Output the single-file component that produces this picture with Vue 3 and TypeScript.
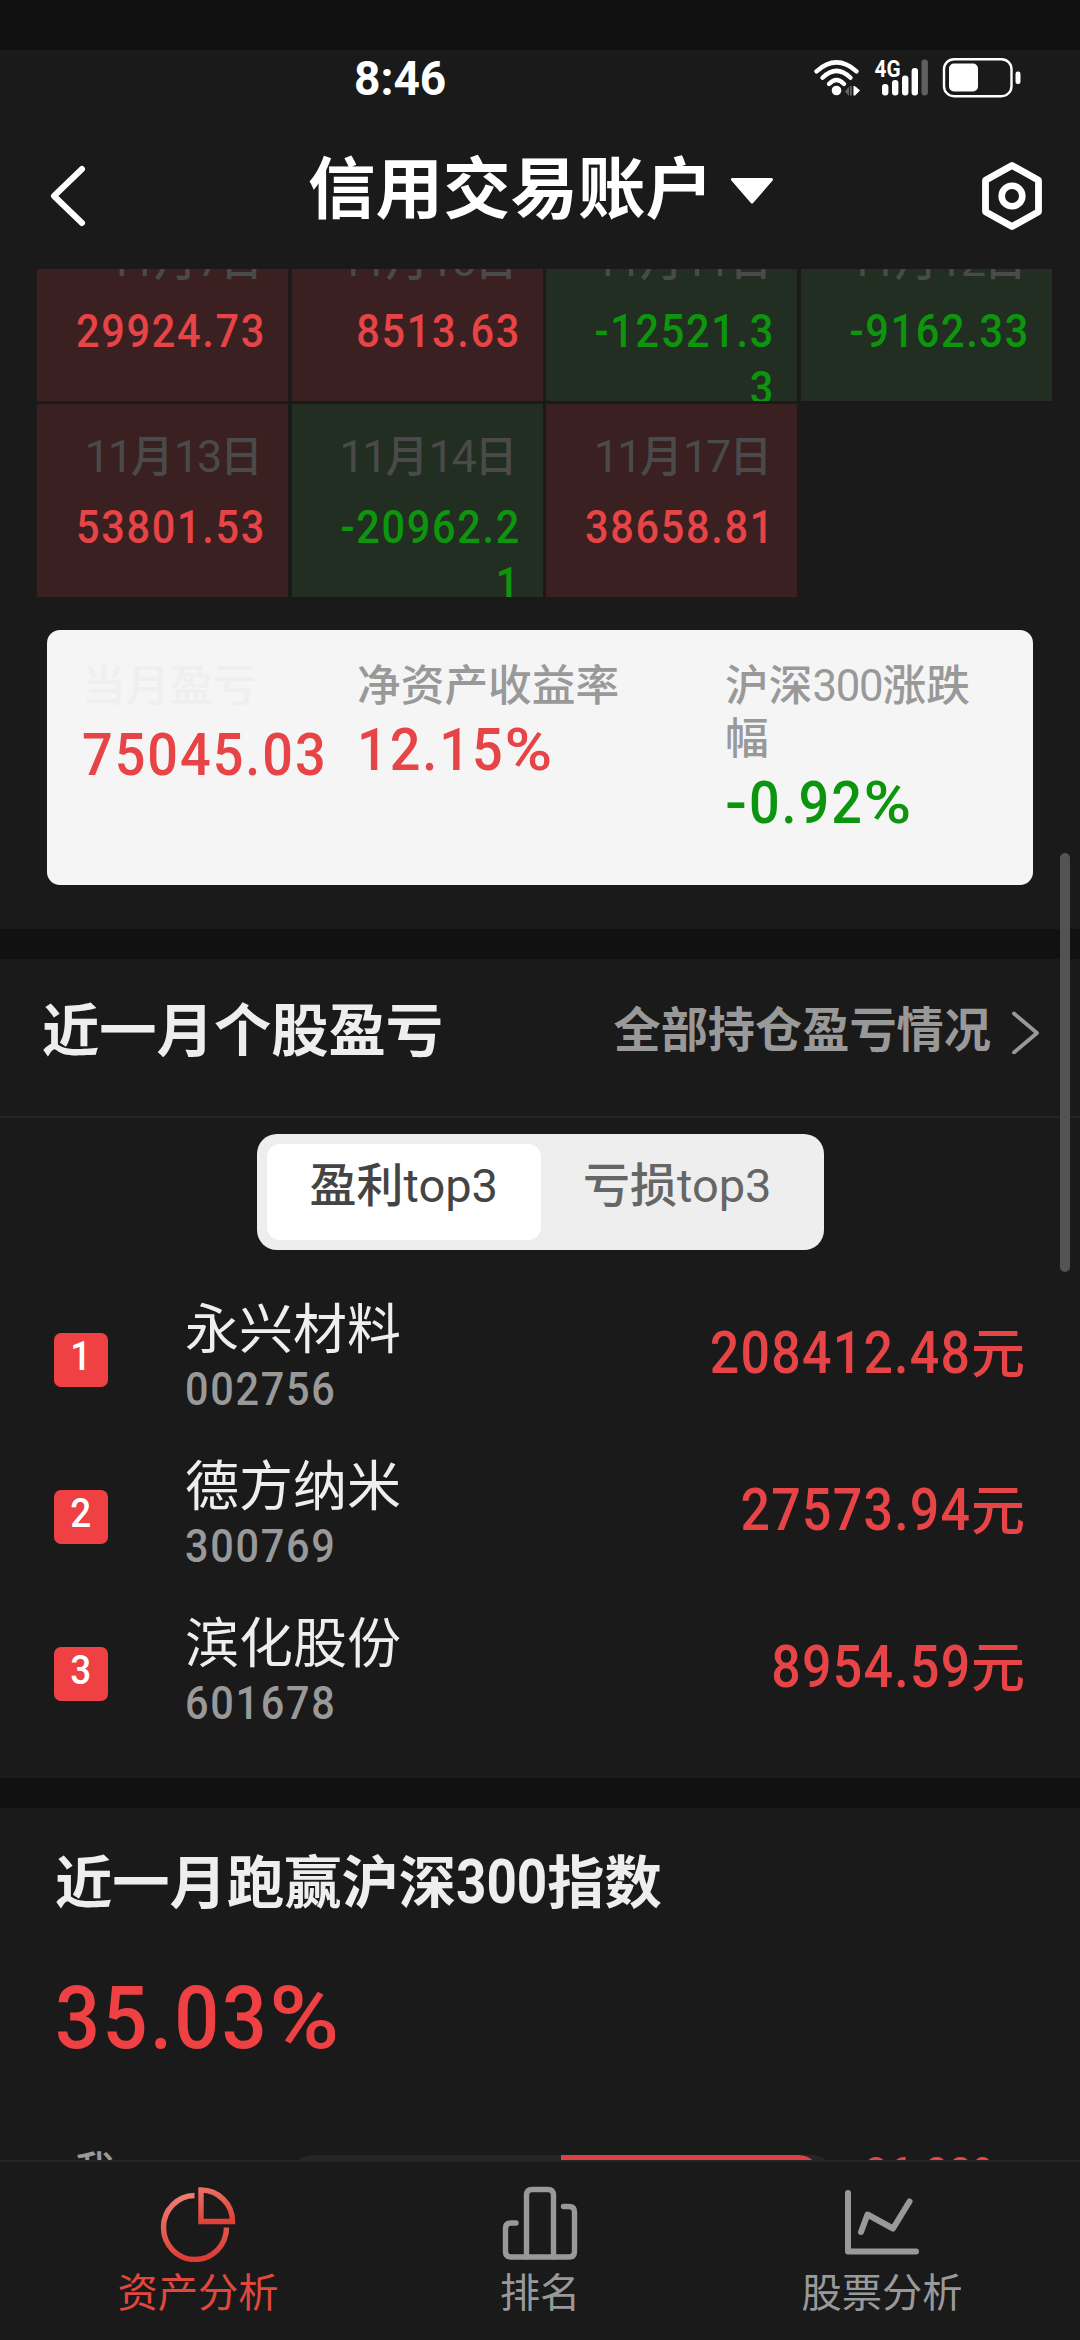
<script setup lang="ts">
interface DayCell { date: string; value: string; up: boolean }
interface Stock { rank: number; name: string; code: string; amount: string }

const days: DayCell[] = [
  { date: '11月7日', value: '29924.73', up: true },
  { date: '11月10日', value: '8513.63', up: true },
  { date: '11月11日', value: '-12521.33', up: false },
  { date: '11月12日', value: '-9162.33', up: false },
  { date: '11月13日', value: '53801.53', up: true },
  { date: '11月14日', value: '-20962.21', up: false },
  { date: '11月17日', value: '38658.81', up: true },
]

const stocks: Stock[] = [
  { rank: 1, name: '永兴材料', code: '002756', amount: '208412.48' },
  { rank: 2, name: '德方纳米', code: '300769', amount: '27573.94' },
  { rank: 3, name: '滨化股份', code: '601678', amount: '8954.59' },
]

// Splits "11月13日" into digit runs and characters so they can be spaced separately.
const dateParts = (date: string): string[] => date.match(/\d+|\D/g) ?? []
</script>

<template>
  <div class="screen">
    <div class="top-strip"></div>

    <div class="status">
      <span class="clock">8:46</span>
      <svg class="status-icons" width="210" height="42" viewBox="0 0 210 42">
        <g fill="none" stroke="#fff" stroke-width="4.4" stroke-linecap="round">
          <path d="M3.500 13.300Q23.500 -4.500 43.500 13.300" />
          <path d="M9.500 19.800Q23.500 6 37.500 19.800" />
          <path d="M16 26Q23.500 18 31 26" />
        </g>
        <circle cx="23.500" cy="32.500" r="4.800" fill="#fff" />
        <path d="M32 33.500l4-5v9.500zM37 28h1.800v9.500H37z" fill="#666" />
        <path d="M40.500 28h1.800v9.500h-1.800zM42 28l5 4.500l-5 5z" fill="#fff" />
        <text x="61.500" y="19" class="net" textLength="26" lengthAdjust="spacingAndGlyphs">4G</text>
        <g fill="#fff">
          <rect x="69" y="26" width="6.400" height="11.500" rx="3" />
          <rect x="79" y="22" width="6.400" height="15.500" rx="3" />
          <rect x="89" y="17.500" width="6.400" height="20" rx="3" />
          <rect x="98.600" y="10" width="6.400" height="27.500" rx="3" />
        </g>
        <rect x="108.500" y="1.500" width="6.400" height="36" rx="3" fill="#606060" />
        <rect x="131" y="1.200" width="67.500" height="37" rx="10" fill="none" stroke="#fff" stroke-width="2.400" />
        <rect x="136" y="5.500" width="29" height="28" rx="5" fill="#fff" />
        <rect x="202.500" y="13.500" width="5" height="12.500" rx="2.300" fill="#fff" />
      </svg>
    </div>

    <header class="nav">
      <svg class="back" width="40" height="64" viewBox="0 0 40 64">
        <path d="M34 5L6 32L34 59" fill="none" stroke="#fff" stroke-width="6" stroke-linecap="round" stroke-linejoin="round" />
      </svg>
      <div class="nav-title">
        <span>信用交易账户</span>
        <svg width="46" height="30" viewBox="0 0 46 30">
          <path d="M3.500 3.500H42.500L23 26Z" fill="#fff" stroke="#fff" stroke-width="3" stroke-linejoin="round" />
        </svg>
      </div>
      <svg class="gear" width="64" height="72" viewBox="0 0 64 72">
        <path d="M32 5.500L58.500 20.200V51.800L32 66.500L5.500 51.800V20.200Z" fill="none" stroke="#fff" stroke-width="6.800" stroke-linejoin="round" />
        <circle cx="32" cy="36" r="10.300" fill="none" stroke="#fff" stroke-width="6.600" />
      </svg>
    </header>

    <main class="scroller">
      <div class="calendar">
        <div v-for="d in days" :key="d.date" class="day" :class="d.up ? 'day-up' : 'day-down'">
          <div class="day-date"><span v-for="(p, i) in dateParts(d.date)" :key="i" :class="{ digits: /\d/.test(p) }">{{ p }}</span></div>
          <div class="day-value">{{ d.value }}</div>
        </div>
      </div>

      <section class="summary">
        <div class="sum-col first">
          <div class="sum-label faint">当月盈亏</div>
          <div class="sum-value red">75045.03</div>
        </div>
        <div class="sum-col second">
          <div class="sum-label">净资产收益率</div>
          <div class="sum-value red">12.15<span class="percent">%</span></div>
        </div>
        <div class="sum-col third">
          <div class="sum-label">沪深<span class="tight">300</span>涨跌幅</div>
          <div class="sum-value green"><span class="minus">-</span>0.92<span class="percent">%</span></div>
        </div>
      </section>

      <div class="band first-band"></div>

      <div class="section-head">
        <h2>近一月个股盈亏</h2>
        <div class="more">
          <span>全部持仓盈亏情况</span>
          <svg width="30" height="44" viewBox="0 0 30 44">
            <path d="M3 3.500L26 23L3 42.500" fill="none" stroke="#999" stroke-width="3.800" stroke-linecap="round" stroke-linejoin="round" />
          </svg>
        </div>
      </div>

      <div class="tabs">
        <div class="tab active">盈利<span class="latin">top3</span></div>
        <div class="tab">亏损<span class="latin">top3</span></div>
      </div>

      <div class="stocks">
        <div v-for="s in stocks" :key="s.rank" class="stock">
          <div class="rank"><span>{{ s.rank }}</span></div>
          <div class="who">
            <div class="name">{{ s.name }}</div>
            <div class="code">{{ s.code }}</div>
          </div>
          <div class="amount"><span class="sum">{{ s.amount }}</span><span class="yuan">元</span></div>
        </div>
      </div>

      <div class="band"></div>

      <section class="beat">
        <h2>近一月跑赢沪深<span class="num">300</span>指数</h2>
        <div class="beat-value">35.03<span class="percent">%</span></div>
        <div class="compare">
          <span class="me">我</span>
          <div class="track"><div class="fill"></div></div>
          <span class="pct">36.22<span class="percent">%</span></span>
        </div>
      </section>
    </main>

    <nav class="bottom">
      <div class="item on">
        <svg width="76" height="76" viewBox="0 0 76 76">
          <defs>
            <linearGradient id="ring" gradientUnits="userSpaceOnUse" x1="0" y1="0" x2="12" y2="76">
              <stop offset="0" stop-color="#f08a7c" />
              <stop offset="1" stop-color="#de3d34" />
            </linearGradient>
            <linearGradient id="slice" gradientUnits="userSpaceOnUse" x1="50" y1="0" x2="54" y2="38">
              <stop offset="0" stop-color="#ec7164" />
              <stop offset="1" stop-color="#e03f36" />
            </linearGradient>
          </defs>
          <path d="M34.500 9.500A31.500 32 0 1 0 66.500 41.500" fill="none" stroke="url(#ring)" stroke-width="5.400" />
          <path d="M41 4V35.500H72.500A31.500 31.500 0 0 0 41 4Z" fill="none" stroke="url(#slice)" stroke-width="5.400" />
        </svg>
        <span>资产分析</span>
      </div>
      <div class="item">
        <svg width="76" height="76" viewBox="0 0 76 76">
          <g fill="none" stroke="#999" stroke-width="5.400" stroke-linecap="round" stroke-linejoin="round">
            <path d="M24.500 71V9.500Q24.500 3.500 30 3.500H46Q51.500 3.500 51.500 9.500V71" />
            <path d="M14 37H9Q3.500 37 3.500 42.500V65.500Q3.500 71 9 71H67Q72.500 71 72.500 65.500V26Q72.500 20.500 67 20.500H61.500" />
          </g>
        </svg>
        <span>排名</span>
      </div>
      <div class="item">
        <svg width="76" height="76" viewBox="0 0 76 76">
          <g fill="none" stroke="#999" stroke-width="6" stroke-linecap="round" stroke-linejoin="round">
            <path d="M4 7V65.500H72" />
            <path d="M17 46L23.500 28.500L49 42.500L65.500 15.500" />
          </g>
        </svg>
        <span>股票分析</span>
      </div>
    </nav>

    <div class="scrollbar"></div>
  </div>
</template>

<style>
body {
  margin: 0;
  background: #1a1a1a;
}
</style>

<style scoped>
.screen {
  position: relative;
  display: flex;
  flex-direction: column;
  width: 1080px;
  height: 2340px;
  overflow: hidden;
  background: #1a1a1a;
  color: #eee;
  font-family: Roboto, "Noto Sans CJK SC", sans-serif;
}
.top-strip {
  flex: none;
  height: 50px;
  background: #111;
}
.status {
  flex: none;
  display: flex;
  align-items: flex-start;
  justify-content: space-between;
  height: 90px;
  padding: 0 45px 0 354px;
  box-sizing: border-box;
}
.clock {
  color: #fff;
  font-size: 48px;
  font-weight: 700;
  line-height: 58px;
  transform: scaleX(0.96);
  transform-origin: left;
}
.status-icons {
  margin: 8px 12px 0 0;
}
.net {
  font-family: Roboto, sans-serif;
  font-size: 24px;
  font-weight: 700;
  fill: #fff;
}
.nav {
  flex: none;
  display: flex;
  align-items: center;
  justify-content: space-between;
  height: 129px;
  padding: 0 36px 18px 48px;
  box-sizing: border-box;
}
.back,
.gear {
  flex: none;
}
.nav-title {
  display: flex;
  align-items: center;
  gap: 16px;
  color: #fff;
  font-size: 67.500px;
  font-weight: 700;
  line-height: 80px;
  padding: 0 0 12px 15px;
}
.nav-title svg {
  margin-top: 3px;
}
.scroller {
  flex: none;
  display: flex;
  flex-direction: column;
  height: 1891px;
  overflow: hidden;
}
.calendar {
  flex: none;
  display: grid;
  grid-template-columns: repeat(4, 251px);
  grid-auto-rows: 193px;
  gap: 3px 3.600px;
  margin: -61px 0 0 37px;
}
.day {
  overflow: hidden;
  box-sizing: border-box;
  padding: 25px 22px 0 0;
  text-align: right;
}
.day-up {
  background: #3a2020;
  color: #e64446;
}
.day-down {
  background: #232e23;
  color: #0d960d;
}
.day-date {
  color: #4a4a4a;
  font-size: 43px;
  font-weight: 500;
  line-height: 56px;
  padding-right: 3px;
}
.digits {
  font-size: 45px;
  font-weight: 400;
  letter-spacing: -2.200px;
}
.day-value {
  width: 217px;
  margin: 14px 0 0 auto;
  font-size: 46px;
  font-weight: 500;
  line-height: 57px;
  letter-spacing: 1.900px;
  word-break: break-all;
  transform: scaleX(0.9);
  transform-origin: right;
}
.summary {
  flex: none;
  display: flex;
  box-sizing: border-box;
  height: 255px;
  margin: 33px 47px 0;
  padding: 30px 0 0 35px;
  border-radius: 13px;
  background: #f5f5f5;
}
.sum-col.first { width: 275px; }
.sum-col.second { width: 368px; }
.sum-col.third { width: 250px; }
.sum-label {
  color: #999;
  font-size: 43.700px;
  font-weight: 500;
  line-height: 53px;
}
.tight {
  font-weight: 400;
  letter-spacing: -1.200px;
}
.faint {
  color: #efefef;
}
.sum-value {
  width: 280px;
  margin-top: 2px;
  font-size: 60px;
  font-weight: 500;
  line-height: 70px;
  letter-spacing: 2.200px;
  transform: scaleX(0.9);
  transform-origin: left;
}
.first .sum-value { margin-top: 7px; }
.percent {
  display: inline-block;
  letter-spacing: 0;
  transform: scaleX(1.2);
  transform-origin: left;
}
.minus {
  display: inline-block;
  margin-right: 4px;
  transform: scaleX(1.2);
  transform-origin: left;
}
.red { color: #e64446; }
.green { color: #0d960d; }
.band {
  flex: none;
  height: 30px;
  background: #111;
}
.first-band {
  margin-top: 44px;
}
.section-head {
  flex: none;
  display: flex;
  align-items: center;
  justify-content: space-between;
  height: 159px;
  box-sizing: border-box;
  padding: 0 39px 12px 42px;
  border-bottom: 2px solid #242424;
}
h2 {
  margin: 0;
  color: #eee;
  font-size: 57.300px;
  font-weight: 700;
  line-height: 80px;
}
.more {
  display: flex;
  align-items: center;
  gap: 20px;
  color: #999;
  font-size: 47.200px;
  font-weight: 700;
  line-height: 60px;
}
.more span {
  padding-bottom: 2px;
}
.tabs {
  flex: none;
  display: flex;
  width: 567px;
  height: 116px;
  box-sizing: border-box;
  margin: 16px 0 0 257px;
  padding: 10px;
  border-radius: 20px;
  background: #eee;
}
.tab {
  flex: 1;
  border-radius: 13px;
  text-align: center;
  font-size: 47px;
  font-weight: 500;
  line-height: 84px;
  color: #666;
}
.latin {
  font-weight: 400;
}
.tab.active {
  background: #fff;
  color: #444;
}
.stocks {
  flex: none;
  height: 528px;
  box-sizing: border-box;
  padding-top: 40px;
}
.stock {
  display: flex;
  align-items: flex-start;
  height: 157px;
  padding: 0 55px 0 54px;
}
.rank {
  width: 54px;
  height: 54px;
  margin-top: 43px;
  border-radius: 7px;
  background: #ef4143;
  color: #fff;
  font-size: 41px;
  font-weight: 500;
  line-height: 47px;
  text-align: center;
}
.rank span {
  display: inline-block;
  transform: scaleX(0.9);
}
.who {
  flex: 1;
  margin-left: 77px;
}
.name {
  padding-top: 3px;
  color: #eee;
  font-size: 54px;
  line-height: 76px;
}
.code {
  margin-top: -3px;
  color: #999;
  font-size: 46px;
  font-weight: 500;
  line-height: 46px;
  letter-spacing: 1.900px;
  transform: scaleX(0.9);
  transform-origin: left;
}
.amount {
  margin-top: 28px;
  color: #e64446;
  font-size: 59px;
  font-weight: 500;
  line-height: 70px;
}
.sum {
  display: inline-block;
  letter-spacing: 1.400px;
  transform: scaleX(0.88);
  transform-origin: right;
}
.yuan {
  font-size: 54px;
}
.beat {
  flex: none;
  padding: 34px 55px 0;
}
.num {
  display: inline-block;
  margin-right: -15.500px;
  font-size: 62px;
  transform: scaleX(0.855);
  transform-origin: left;
}
.beat-value {
  width: 400px;
  margin-top: 42px;
  color: #ef4143;
  font-size: 88px;
  font-weight: 500;
  line-height: 104px;
  letter-spacing: 2.700px;
  transform: scaleX(0.9);
  transform-origin: left;
}
.compare {
  display: flex;
  align-items: flex-start;
  margin-top: 77px;
}
.me {
  width: 217px;
  padding-left: 20px;
  color: #999;
  font-size: 40px;
  font-weight: 500;
  line-height: 50px;
}
.track {
  width: 541px;
  height: 40px;
  margin-top: 8px;
  border-radius: 20px;
  background: #262626;
}
.fill {
  width: 258px;
  height: 40px;
  margin-left: 269px;
  border-radius: 0 20px 20px 0;
  background: #d84345;
}
.pct {
  margin-left: 32px;
  color: #e64446;
  font-size: 43px;
  font-weight: 500;
  line-height: 50px;
  letter-spacing: 2.100px;
  transform: scaleX(0.9);
  transform-origin: left;
}
.bottom {
  flex: 1;
  display: flex;
  box-sizing: border-box;
  padding: 24px 27px 0;
  border-top: 2px solid #262626;
  background: #1a1a1a;
}
.item {
  flex: 1;
  display: flex;
  flex-direction: column;
  align-items: center;
  color: #999;
  font-size: 40.300px;
  line-height: 60px;
}
.item.on {
  color: #e0483d;
}
.item span {
  margin-top: 2px;
}
.scrollbar {
  position: absolute;
  right: 10px;
  top: 853px;
  width: 10px;
  height: 419px;
  border-radius: 5px;
  background: #535353;
}
</style>
